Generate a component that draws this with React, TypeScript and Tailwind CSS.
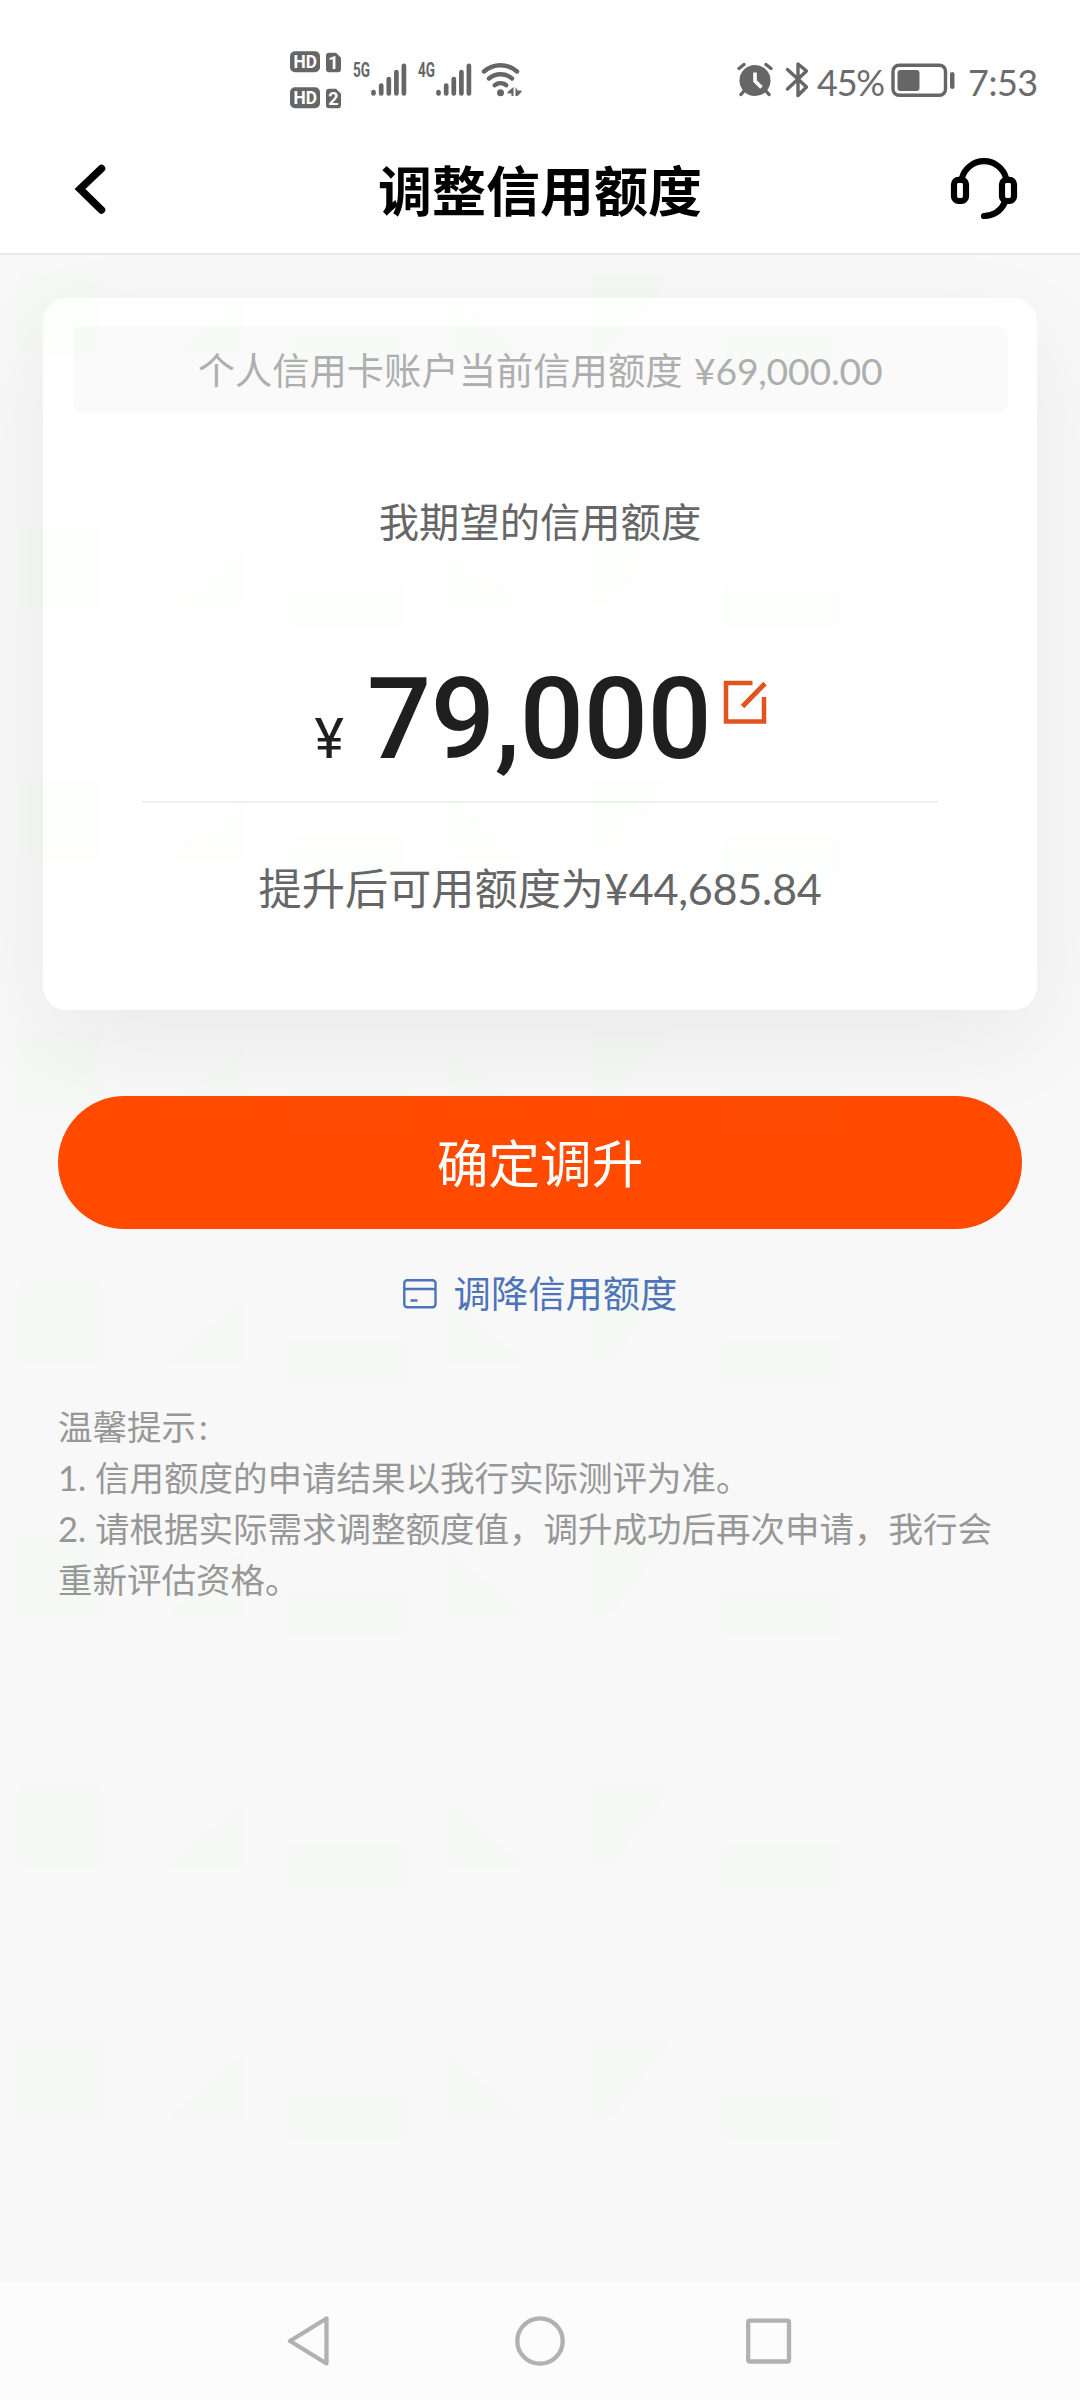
import React from "react";

function Signal({ label }: { label: string }) {
  return (
    <svg width="55" height="44" viewBox="-2 -8 55 44" className="block">
      <text x="-1" y="17" fontSize="20" fontWeight="700" fontFamily="Roboto,sans-serif" textLength="17" lengthAdjust="spacingAndGlyphs" fill="#666">
        {label}
      </text>
      <g stroke="#666" strokeWidth="4.700" strokeLinecap="round">
        <path d="M19.500 32v1.500M27.200 25.500v8M34.800 19v14.500M42.400 12.200v21.300M49.900 5.800v27.700" />
      </g>
    </svg>
  );
}

function HdBadge({ sim }: { sim: string }) {
  return (
    <svg width="52" height="22" viewBox="0 0 52 22" className="block">
      <rect x="0" y="0.2" width="30" height="21" rx="5" fill="#666" />
      <text x="3.500" y="17.300" fontSize="18.500" fontWeight="700" fontFamily="Roboto,sans-serif" textLength="23.500" lengthAdjust="spacingAndGlyphs" fill="#fff">
        HD
      </text>
      <path d="M39 1.800h7l5 5v11.400a3 3 0 0 1-3 3h-9a3 3 0 0 1-3-3v-13.400a3 3 0 0 1 3-3z" fill="#666" />
      <text x="43.300" y="17.800" fontSize="18" fontWeight="700" textAnchor="middle" fontFamily="Roboto,sans-serif" fill="#fff">
        {sim}
      </text>
    </svg>
  );
}

function StatusBar() {
  return (
    <div className="flex h-[130px] items-start pl-[290px]">
      <div className="mt-[51px] flex flex-col gap-[14px]">
        <HdBadge sim="1" />
        <HdBadge sim="2" />
      </div>
      <div className="mt-[52px] ml-[10px] flex gap-[10px]">
        <Signal label="5G" />
        <Signal label="4G" />
      </div>
      <svg width="42" height="38" viewBox="0 0 42 38" className="mt-[60px] ml-[9px] block">
        <g fill="none" stroke="#666" strokeWidth="4.400" strokeLinecap="round">
          <path d="M3 11.500a25 25 0 0 1 33 0" />
          <path d="M8 18.500a17.500 17.500 0 0 1 23 0" />
          <path d="M13.700 25.200a9.500 9.500 0 0 1 11.600 0" />
        </g>
        <circle cx="19.500" cy="32.800" r="3.500" fill="#666" />
        <path d="M32.500 27v9h-2v-2.500h-4v-1.500zM34.500 27l2 3.500h4v1.500l-4 4h-2z" fill="#666" />
      </svg>
      <svg width="36" height="36" viewBox="0 0 36 36" className="mt-[61px] ml-[214px] block">
        <g stroke="#666" strokeWidth="3.400" strokeLinecap="round">
          <path d="M2 7.500l5-4M34 7.500l-5-4M7 30l-3 3.500M29 30l3 3.500" />
        </g>
        <circle cx="18" cy="19.500" r="15.500" fill="#666" />
        <path d="M18 11.500v8.500l6.500 6.500" fill="none" stroke="#fff" strokeWidth="3.600" />
      </svg>
      <svg width="24" height="38" viewBox="0 0 24 38" className="mt-[60px] ml-[12px] block">
        <path d="M2.500 9.500l19 17.500-8.500 8.500V4l8.500 7-19 18" fill="none" stroke="#666" strokeWidth="3.400" strokeLinecap="round" strokeLinejoin="round" />
      </svg>
      <div className="mt-[60px] ml-[8px] w-[70px] font-['Lato','Noto_Sans_CJK_SC',sans-serif] text-[36px] leading-[44px] tracking-[-1.200px] text-[#6c6c6c]">45%</div>
      <svg width="66" height="36" viewBox="0 0 66 36" className="mt-[62px] ml-[4px] block">
        <rect x="2" y="3.200" width="52.500" height="30" rx="6" fill="none" stroke="#666" strokeWidth="3.400" />
        <rect x="6.500" y="8" width="22" height="21" rx="3" fill="#666" />
        <rect x="59" y="10" width="4.500" height="17" rx="2.200" fill="#666" />
      </svg>
      <div className="mt-[60px] ml-[11px] whitespace-nowrap font-['Lato','Noto_Sans_CJK_SC',sans-serif] text-[36px] leading-[44px] tracking-[-0.500px] text-[#6c6c6c]">7:53</div>
    </div>
  );
}

function Header() {
  return (
    <header className="flex h-[125px] items-start justify-between border-b-2 border-[#e9e9e9]">
      <svg width="120" height="120" viewBox="0 130 120 120" className="block">
        <path d="M101.500 168.500L80 189l21.500 21" fill="none" stroke="#000" strokeWidth="7.500" strokeLinecap="round" strokeLinejoin="miter" />
      </svg>
      <h1 className="mt-[22px] font-['Lato','Noto_Sans_CJK_SC',sans-serif] text-[54px] leading-[80px] font-bold text-black">调整信用额度</h1>
      <svg width="120" height="120" viewBox="920 130 120 120" className="mr-[40px] -ml-[40px] block">
        <g fill="none" stroke="#000" strokeWidth="6.200" strokeLinecap="round">
          <rect x="954" y="179.800" width="12" height="21.200" rx="4.500" />
          <rect x="1002" y="179.800" width="12" height="21.200" rx="4.500" />
          <path d="M962 178a22.800 22.800 0 0 1 44 0" />
          <path d="M1005 202c-4 9-11 13.500-21 14" />
        </g>
      </svg>
    </header>
  );
}

function LimitCard() {
  return (
    <section className="mx-[43px] mt-[43px] flex h-[712px] flex-col items-center rounded-[24px] bg-white pt-[28px] shadow-[0_32px_100px_rgba(0,0,0,0.06)]">
      <div className="h-[87px] w-[935px] rounded-[10px] bg-[#fafafa] text-center font-['Lato','Noto_Sans_CJK_SC',sans-serif] text-[37.300px] leading-[89px] whitespace-pre text-[#aeaeae]">
        个人信用卡账户当前信用额度 <span className="ml-[2px] tracking-[-0.200px]">¥69,000.00</span>
      </div>
      <div className="mt-[79px] font-['Lato','Noto_Sans_CJK_SC',sans-serif] text-[40.300px] leading-[60px] text-[#666]">我期望的信用额度</div>
      <div className="mt-[93px] flex h-[158px] w-[796px] items-start justify-center border-b-2 border-[#efefef]">
        <div className="flex items-baseline pl-[3px] font-['Roboto','Noto_Sans_CJK_SC',sans-serif] leading-[150px] text-[#1f1f1f]">
          <span className="mr-[23px] text-[56px]">¥</span>
          <span className="text-[113px] font-medium tracking-[-0.300px]">79,000</span>
        </div>
        <svg width="46" height="46" viewBox="0 0 46 46" className="mt-[35px] ml-[11px] block">
          <path d="M29.500 3H3v38.500h38V17" fill="none" stroke="#e2531f" strokeWidth="4.500" />
          <path d="M19.500 26.500L42 3.500" fill="none" stroke="#e2531f" strokeWidth="4.800" />
        </svg>
      </div>
      <div className="mt-[55px] font-['Lato','Noto_Sans_CJK_SC',sans-serif] text-[43.200px] leading-[60px] text-[#666]">
        提升后可用额度为<span className="tracking-[-0.300px]">¥44,685.84</span>
      </div>
    </section>
  );
}

/* Faint green tile mark repeated down the page every 252px. */
function Watermark() {
  return (
    <svg width="1080" height="2027" viewBox="0 255 1080 2027" className="pointer-events-none absolute top-[255px] left-0">
      <defs>
        <pattern id="mark" x="0" y="275" width="1080" height="252" patternUnits="userSpaceOnUse">
          <g fill="#7dff5a" fillOpacity="0.010">
            <path d="M20 0h80v80H20zM243 16v64h-75zM289 58h115v42H289zM449 16l76 64h-76zM591 0h80l-60 78h-20zM724 58h114v42H724z" />
          </g>
        </pattern>
      </defs>
      <rect x="0" y="275" width="1080" height="2007" fill="url(#mark)" />
    </svg>
  );
}

function NavBar() {
  return (
    <nav className="flex h-[118px] items-start justify-center gap-[179px] bg-[#fcfcfc] pt-[34px]">
      <svg width="50" height="50" viewBox="0 0 50 50" className="block">
        <path d="M40.500 2.500v45L4 25z" fill="none" stroke="#b1b1b1" strokeWidth="4.300" strokeLinejoin="round" />
      </svg>
      <svg width="50" height="50" viewBox="0 0 50 50" className="block">
        <circle cx="25" cy="25" r="22.700" fill="none" stroke="#b1b1b1" strokeWidth="4.300" />
      </svg>
      <svg width="50" height="50" viewBox="0 0 50 50" className="block">
        <rect x="4.200" y="4.700" width="40.800" height="40.800" rx="1.500" fill="none" stroke="#b1b1b1" strokeWidth="4.300" />
      </svg>
    </nav>
  );
}

export default function App() {
  return (
    <div className="relative flex h-[2400px] w-[1080px] flex-col overflow-hidden bg-[#f8f8f8]">
      <div className="bg-white">
        <StatusBar />
        <Header />
      </div>
      <main className="flex flex-1 flex-col">
        <LimitCard />
        <button className="mx-[58px] mt-[86px] h-[133px] rounded-full bg-[#ff4a00] font-['Lato','Noto_Sans_CJK_SC',sans-serif] text-[51.700px] leading-[133px] text-white">
          <span className="block pt-px">确定调升</span>
        </button>
        <div className="mt-[35px] flex items-center justify-center gap-[17px] text-[#4d73b8]">
          <svg width="34" height="30" viewBox="0 0 34 30" className="block" fill="none" stroke="currentColor">
            <rect x="1.300" y="1.300" width="31.200" height="27" rx="3" strokeWidth="2.400" />
            <path d="M1.300 10h31.200M7.500 21.500h7" strokeWidth="2.600" />
          </svg>
          <span className="font-['Lato','Noto_Sans_CJK_SC',sans-serif] text-[37.300px] leading-[60px]">调降信用额度</span>
        </div>
        <div className="mt-[77px] ml-[58px] w-[970px] font-['Lato','Noto_Sans_CJK_SC',sans-serif] text-[34.500px] leading-[51px] text-[#979797]">
          <p>
            温馨提示<span className="ml-[3px]">:</span>
          </p>
          <p>1. 信用额度的申请结果以我行实际测评为准。</p>
          <p>2. 请根据实际需求调整额度值，调升成功后再次申请，我行会</p>
          <p>重新评估资格。</p>
        </div>
      </main>
      <NavBar />
      <Watermark />
    </div>
  );
}
